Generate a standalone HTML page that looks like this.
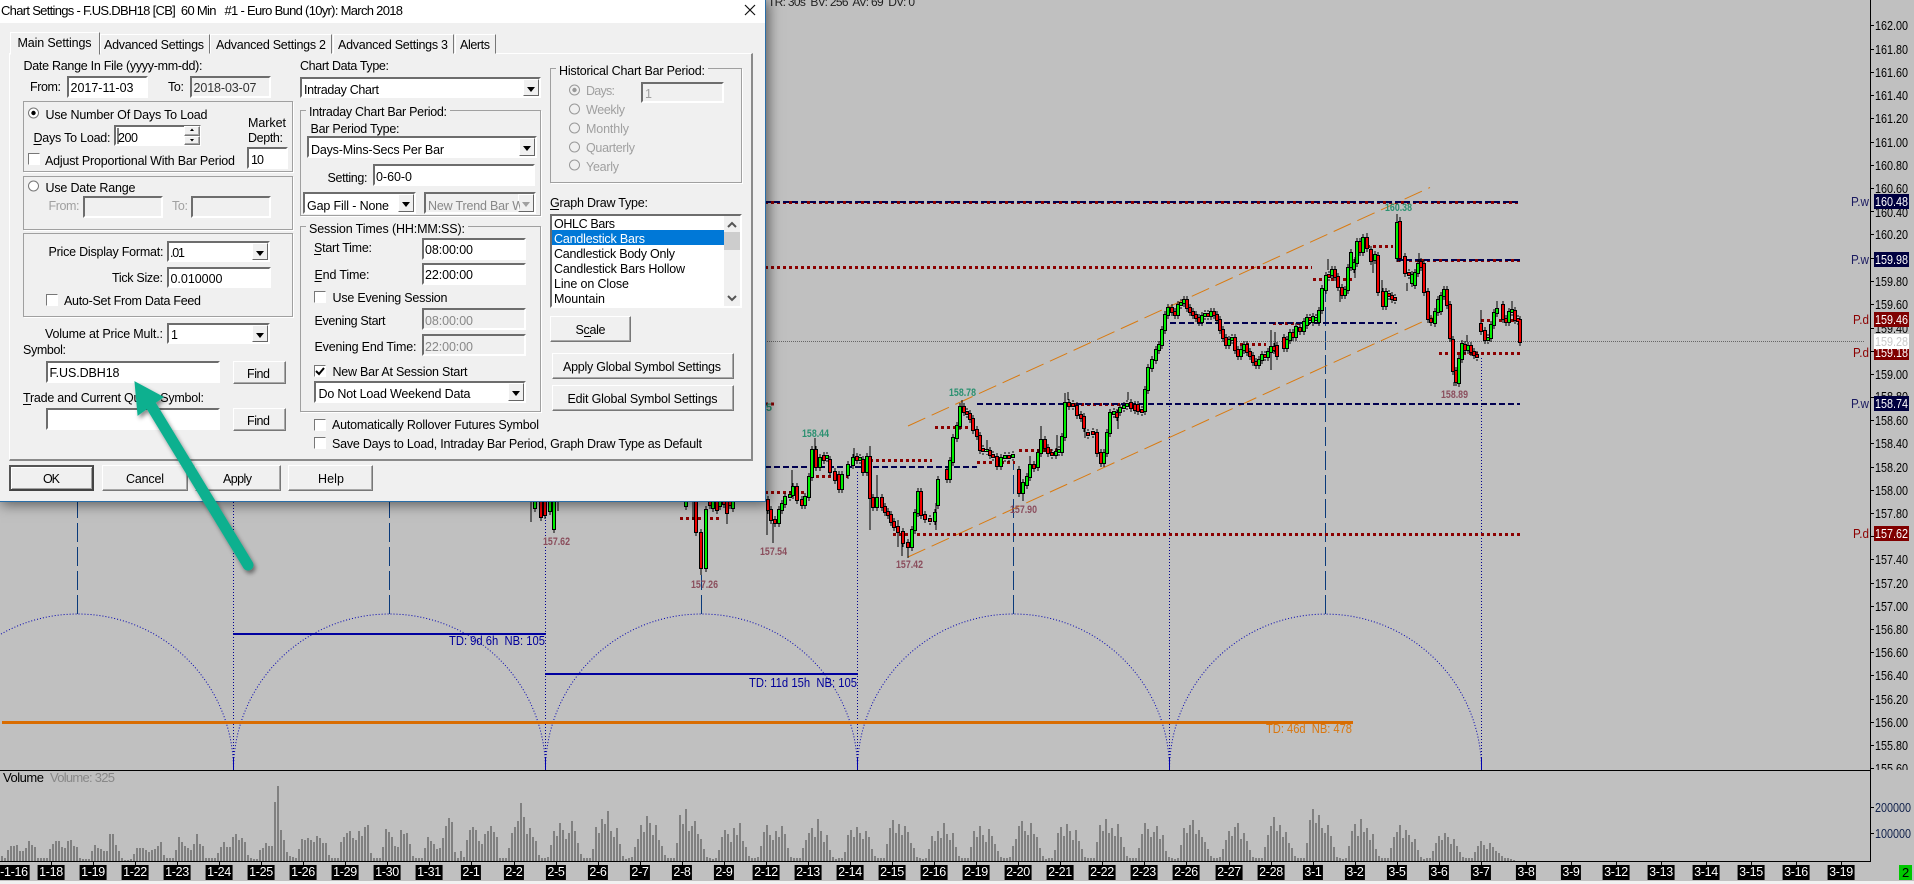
<!DOCTYPE html>
<html><head><meta charset="utf-8"><title>Chart Settings</title>
<style>
html,body{margin:0;padding:0;background:#c0c0c0}
#r{position:relative;width:1914px;height:884px;overflow:hidden;background:#c0c0c0;font-family:"Liberation Sans",sans-serif}
svg{position:absolute;left:0;top:0;overflow:hidden}
svg text{font-family:"Liberation Sans",sans-serif}
div{position:absolute;box-sizing:border-box}
i{position:absolute;top:865px;height:15px;line-height:15px;background:#000;color:#fff;font:normal 12.5px/15px "Liberation Sans",sans-serif;padding:0 1.5px;transform:translateX(-50%);letter-spacing:-.3px;white-space:nowrap}
#d{left:0;top:0;width:766px;height:502px;background:#f0f0f0;border-right:1px solid #2a6ea8;border-bottom:1px solid #2a6ea8;box-shadow:2px 2px 12px 1px rgba(0,0,0,.5)}
.ti{left:0;top:0;width:765px;height:23px;background:#fff}
.f{left:9px;top:53px;width:744px;height:408px;border:2px solid;border-color:#fff #8a8a8a #8a8a8a #fff;border-top-width:1px;border-left-width:1px}
.t{background:#f0f0f0;border:1px solid;border-color:#fff #777 #f0f0f0 #fff}
.g{border:1px solid #a0a0a0;box-shadow:1px 1px #fff}
.i,.n,.c{background:#fff;border:2px solid;border-color:#6d6d6d #fff #fff #6d6d6d}
.n{background:#f0f0f0}
.a{right:0;top:0;bottom:0;width:16px;background:#f0f0f0;border:1px solid;border-color:#fff #666 #666 #fff}
.a:after{content:"";position:absolute;left:3px;top:7px;border:4px solid transparent;border-top:5px solid #000;border-bottom:0}
.a.x:after{border-top-color:#a0a0a0}
.b{background:#f0f0f0;border:1px solid;border-color:#fff #777 #777 #fff;box-shadow:inset -1px -1px #a8a8a8}
.o{background:#f0f0f0;border:2px solid;border-color:#555 #444 #444 #555;box-shadow:inset 1px 1px #fff,inset -1px -1px #a0a0a0}
.k{width:12px;height:12px;background:#fff;border:1px solid;border-color:#777 #fff #fff #777}
</style></head><body><div id="r">

<svg width="1914" height="884" viewBox="0 0 1914 884">
<defs>
<pattern id="v" width="3" height="10" patternUnits="userSpaceOnUse"><rect x="1" width="2" height="10" fill="#808080"/></pattern>
<path id="G" fill="none" d="M779 523V510M782 510V504M785 504V497M790 497V495M793 495V487M805 505V497M809 497V477M812 477V450M820 467V458M827 458V456M842 489V475M848 475V465M853 465V458M860 460V458M867 472V457M877 507V498M912 547V530M915 530V513M918 513V492M935 521V513M938 505V480M950 479V461M953 462V438M957 438V426M960 426V407M987 451V450M1001 466V458M1005 458V456M1013 457V455M1023 493V483M1027 485V477M1030 477V465M1038 467V453M1041 453V440M1056 455V452M1059 452V450M1062 452V437M1065 437V403M1104 463V453M1107 453V433M1110 433V413M1114 414V412M1120 412V408M1124 408V406M1127 406V404M1145 411V390M1148 390V368M1152 368V360M1156 360V350M1159 350V345M1162 345V330M1165 330V315M1168 315V308M1178 315V305M1181 305V303M1184 303V300M1202 322V316M1205 316V314M1211 316V312M1229 345V340M1232 340V338M1241 356V350M1244 350V345M1259 365V360M1262 360V355M1268 357V352M1271 352V347M1287 348V340M1290 340V333M1296 337V327M1304 331V322M1307 325V318M1313 322V317M1316 320V318M1319 322V311M1322 310V289M1326 290V276M1332 275V270M1345 295V290M1348 290V268M1351 267V253M1354 269V263M1357 263V242M1363 252V238M1375 260V255M1386 306V292M1397 258V223M1412 283V275M1415 285V273M1418 273V264M1435 323V312M1438 312V300M1441 311V296M1444 296V290M1459 383V359M1462 359V344M1468 350V346M1488 340V338M1491 338V325M1494 325V313M1497 313V309M1509 322V312M1512 312V310M550 501V511M554 501V529M535 501V508M686 501V506M706 510V568M713 501V508M720 501V506M733 501V508"/>
<path id="R" fill="none" d="M768 500V510M771 510V520M775 520V523M797 487V500M802 500V505M816 450V467M824 456V460M830 460V472M835 472V480M839 475V489M857 457V460M863 460V472M870 457V498M873 498V507M882 498V507M885 507V512M888 512V515M891 515V522M894 522V527M898 527V532M903 532V543M908 543V547M921 492V515M925 515V519M930 519V521M947 470V479M964 407V412M967 412V414M970 414V419M973 419V430M977 430V436M980 436V450M983 449V451M990 451V455M993 455V457M997 457V466M1009 456V458M1019 470V493M1034 465V468M1045 440V448M1048 448V453M1052 453V455M1069 403V406M1073 404V406M1077 406V415M1081 415V418M1084 417V428M1088 433V435M1093 432V434M1097 433V453M1101 453V463M1117 413V417M1131 403V408M1135 405V410M1138 405V411M1142 410V412M1172 308V312M1175 312V315M1187 300V308M1190 308V312M1193 312V315M1196 315V318M1199 318V322M1208 314V316M1214 312V315M1217 315V320M1220 320V330M1223 330V338M1226 338V345M1235 338V350M1238 350V356M1247 345V352M1250 352V356M1253 356V362M1256 362V365M1265 355V357M1274 347V350M1277 346V356M1284 338V348M1293 333V337M1300 328V331M1310 318V320M1329 275V277M1335 270V277M1338 277V287M1342 288V295M1360 242V252M1367 238V248M1371 250V261M1378 256V292M1383 292V306M1389 294V296M1392 296V299M1395 298V300M1400 222V258M1405 257V273M1409 273V275M1421 262V267M1424 264V292M1428 292V319M1431 319V322M1447 290V305M1450 305V338M1453 340V371M1456 371V382M1465 345V350M1471 346V352M1474 352V355M1477 355V357M1481 324V331M1485 331V340M1503 305V319M1506 319V322M1515 311V320M1518 319V321M1520 320V342M541 501V517M545 501V515M696 501V532M701 533V568M727 501V513M710 501V505M717 501V510M724 501V504M730 501V505"/>
<g id="c"><use href="#G"/><use href="#R"/></g>
</defs>

<!-- volume -->
<path fill="url(#v)" transform="translate(0 861) scale(1 -1)" d="M0 0V5h3V3h3V11h3V15h3V15h3V16h3V10h3V10h3V13h3V20h3V16h3V14h3V3h3V3h3V3h3V3h3V12h3V17h3V20h3V20h3V14h3V13h3V20h3V21h3V15h3V14h3V3h3V2h3V2h3V2h3V10h3V16h3V13h3V12h3V10h3V10h3V27h3V27h3V16h3V10h3V3h3V1h3V1h3V2h3V7h3V13h3V13h3V13h3V11h3V9h3V11h3V12h3V15h3V19h3V6h3V3h3V3h3V3h3V11h3V24h3V19h3V15h3V13h3V11h3V17h3V27h3V17h3V15h3V3h3V3h3V3h3V3h3V8h3V14h3V19h3V14h3V14h3V24h3V27h3V21h3V23h3V19h3V6h3V3h3V2h3V2h3V11h3V13h3V18h3V15h3V15h3V59h3V75h3V31h3V21h3V9h3V5h3V4h3V3h3V12h3V22h3V21h3V23h3V21h3V19h3V25h3V23h3V18h3V18h3V6h3V3h3V3h3V3h3V19h3V24h3V28h3V30h3V23h3V21h3V30h3V25h3V34h3V36h3V8h3V3h3V3h3V3h3V14h3V32h3V29h3V24h3V15h3V14h3V31h3V27h3V28h3V17h3V5h3V3h3V3h3V3h3V13h3V24h3V20h3V17h3V12h3V13h3V23h3V35h3V43h3V39h3V9h3V3h3V10h3V4h3V21h3V31h3V34h3V31h3V20h3V17h3V27h3V30h3V35h3V29h3V24h3V3h3V3h3V3h3V13h3V28h3V34h3V40h3V58h3V44h3V27h3V33h3V24h3V20h3V6h3V3h3V3h3V4h3V16h3V30h3V25h3V38h3V31h3V22h3V28h3V40h3V30h3V18h3V7h3V3h3V3h3V3h3V12h3V34h3V28h3V42h3V37h3V50h3V30h3V24h3V33h3V17h3V5h3V2h3V3h3V4h3V14h3V22h3V36h3V29h3V45h3V38h3V26h3V36h3V21h3V15h3V6h3V3h3V3h3V3h3V18h3V46h3V37h3V52h3V30h3V35h3V40h3V27h3V22h3V12h3V4h3V3h3V2h3V3h3V11h3V24h3V31h3V27h3V19h3V33h3V26h3V38h3V20h3V14h3V5h3V3h3V3h3V4h3V15h3V29h3V36h3V26h3V21h3V30h3V24h3V35h3V27h3V13h3V4h3V3h3V3h3V3h3V13h3V21h3V28h3V33h3V24h3V42h3V30h3V19h3V26h3V11h3V4h3V2h3V3h3V3h3V9h3V26h3V31h3V24h3V34h3V28h3V22h3V30h3V24h3V12h3V5h3V3h3V3h3V3h3V17h3V33h3V41h3V28h3V37h3V26h3V35h3V29h3V18h3V13h3V4h3V3h3V2h3V3h3V12h3V25h3V20h3V30h3V23h3V38h3V27h3V21h3V28h3V14h3V5h3V3h3V3h3V3h3V14h3V30h3V24h3V35h3V26h3V19h3V32h3V25h3V17h3V10h3V4h3V3h3V3h3V4h3V15h3V22h3V35h3V40h3V30h3V26h3V38h3V27h3V24h3V13h3V5h3V2h3V3h3V3h3V11h3V28h3V34h3V25h3V37h3V30h3V21h3V31h3V20h3V12h3V4h3V3h3V3h3V3h3V19h3V36h3V30h3V42h3V28h3V33h3V25h3V37h3V24h3V14h3V5h3V3h3V3h3V3h3V13h3V27h3V38h3V32h3V24h3V29h3V35h3V22h3V26h3V10h3V4h3V3h3V2h3V3h3V16h3V33h3V28h3V36h3V41h3V27h3V31h3V24h3V19h3V12h3V5h3V3h3V3h3V4h3V12h3V21h3V30h3V25h3V34h3V38h3V22h3V28h3V20h3V11h3V4h3V3h3V3h3V3h3V14h3V26h3V35h3V44h3V30h3V36h3V24h3V29h3V18h3V13h3V5h3V3h3V3h3V3h3V18h3V41h3V52h3V38h3V46h3V33h3V28h3V36h3V25h3V14h3V4h3V3h3V2h3V3h3V15h3V30h3V37h3V25h3V42h3V29h3V33h3V21h3V27h3V12h3V5h3V3h3V3h3V3h3V13h3V24h3V29h3V36h3V23h3V31h3V26h3V19h3V22h3V11h3V4h3V2h3V3h3V3h3V10h3V18h3V25h3V21h3V28h3V24h3V17h3V22h3V15h3V9h3V4h3V3h3V3h3V3h3V9h3V15h3V20h3V16h3V12h3V18h3V14h3V10h3V8h3V5h3V3h3V3h3V2h3V1h3V0Z"/>

<!-- arches -->
<g fill="none" stroke="#0000b0" stroke-width="1" stroke-dasharray="1 2">
<path d="M-78.5 770A156 156 0 0 1 233.5 770M233.5 770A156 156 0 0 1 545.5 770M545.5 770A156 156 0 0 1 857.5 770M857.5 770A156 156 0 0 1 1169.5 770M1169.5 770A156 156 0 0 1 1481.5 770"/>
<path stroke="#000090" d="M233.5 770V501M545.5 770V501M857.5 770V472M1169.5 770V340M1481.5 770V357"/>
</g>
<path stroke="#0000b0" stroke-width="1" fill="none" d="M233.5 770V758M545.5 770V758M857.5 770V758M1169.5 770V758M1481.5 770V758"/>
<path stroke="#0a3a7a" stroke-width="1" fill="none" stroke-dasharray="19 5" d="M77.5 614V501M389.5 614V501M701.5 614V575M1013.5 614V462M1325.5 614V287"/>

<!-- blue/orange spans -->
<path stroke="#0000a0" stroke-width="2" fill="none" d="M233 634H546M545 674H858"/>
<path stroke="#d96c00" stroke-width="3" fill="none" d="M2 722.5H1353"/>
<text x="449" y="645" font-size="12.5" fill="#00009a" textLength="96" lengthAdjust="spacingAndGlyphs" xml:space="preserve">TD: 9d 6h  NB: 105</text>
<text x="749" y="687" font-size="12.5" fill="#00009a" textLength="108" lengthAdjust="spacingAndGlyphs" xml:space="preserve">TD: 11d 15h  NB: 105</text>
<text x="1266" y="733" font-size="12.5" fill="#d9770f" textLength="86" lengthAdjust="spacingAndGlyphs" xml:space="preserve">TD: 46d  NB: 478</text>

<!-- channel -->
<path stroke="#d97a10" stroke-width="1" fill="none" stroke-dasharray="19 7" d="M908 557L1433 317M908 426L1430 187.5"/>

<!-- levels -->
<path stroke="#8b0000" stroke-width="3" fill="none" stroke-dasharray="3 3" d="M893 534.5H1520M935 427.5H973M870 460.5H932M765 492.5H806M810 476.5H848M977 462.5H1015M1019 450.5H1057M1063 404.5H1120M1273 323.5H1310M1240 344.5H1266M1313 279.5H1352M1355 246.5H1393M765 267.5H1312M1397 260.5H1520M1439 353.5H1520M1481 320.5H1520M765 202.5H1520M680 518.5H719M765 404H775"/>
<path stroke="#000050" stroke-width="2" fill="none" stroke-dasharray="6 3" d="M765 467H977M977 404H1520M1170 323H1397M1397 260H1520M765 202H1520"/>

<!-- current price line -->
<path stroke="#666" stroke-width="1" fill="none" stroke-dasharray="1 1" d="M765 341.5H1865"/>

<!-- candles -->
<g fill="none" stroke="#000">
<use href="#c" stroke-width="1" transform="translate(0 -4)"/>
<use href="#c" stroke-width="1" transform="translate(0 4)"/>
<path stroke-width="1" d="M767 500V535M773 523V543M792 470V497M815 438V450M854 448V458M870 446V530M877 475V507M898 520V547M902 535V556M908 547V558M936 503V530M962 400V407M987 440V450M1023 493V501M1030 456V475M1041 426V440M1057 435V450M1065 393V403M1068 392V400M1085 420V438M1118 410V429M1128 392V400M1271 330V370M1275 332V352M1328 259V270M1340 290V302M1355 257V278M1367 233V238M1373 257V273M1382 280V292M1397 214V223M1400 217V222M1407 283V291M1419 253V262M1454 382V386M1467 335V342M1481 310V324M1497 301V307M1512 301V312M531 501V522M558 501V511M554 529V533M701 568V575M727 513V524M693 501V520"/>
<use href="#c" stroke-width="4" transform="translate(0 -1)"/>
<use href="#c" stroke-width="4" transform="translate(0 1)"/>
</g>
<use href="#G" stroke="#00f000" stroke-width="2"/>
<use href="#R" stroke="#f00000" stroke-width="2"/>

<!-- chart value labels -->
<g font-size="11" fill="#8a4d5c" font-weight="bold">
<text x="543" y="545" textLength="27" lengthAdjust="spacingAndGlyphs">157.62</text>
<text x="691" y="588" textLength="27" lengthAdjust="spacingAndGlyphs">157.26</text>
<text x="760" y="555" textLength="27" lengthAdjust="spacingAndGlyphs">157.54</text>
<text x="896" y="568" textLength="27" lengthAdjust="spacingAndGlyphs">157.42</text>
<text x="1010" y="513" textLength="27" lengthAdjust="spacingAndGlyphs">157.90</text>
<text x="1441" y="398" textLength="27" lengthAdjust="spacingAndGlyphs">158.89</text>
</g>
<g font-size="11" fill="#2a9070" font-weight="bold">
<text x="802" y="437" textLength="27" lengthAdjust="spacingAndGlyphs">158.44</text>
<text x="949" y="396" textLength="27" lengthAdjust="spacingAndGlyphs">158.78</text>
<text x="1385" y="211" textLength="27" lengthAdjust="spacingAndGlyphs">160.38</text>
<text x="766" y="411" textLength="6" lengthAdjust="spacingAndGlyphs">5</text>
</g>
<text x="768" y="6" font-size="12" fill="#222" textLength="147" xml:space="preserve">TR: 30s  BV: 256  AV: 69  DV: 0</text>

<!-- frame lines -->
<path stroke="#000" stroke-width="1" fill="none" d="M0 770.5H1870M0 861.5H1870M1870.5 0V862"/>
<path stroke="#000" stroke-width="1" fill="none" d="M1871 25.5h3M1871 49.5h3M1871 72.5h3M1871 95.5h3M1871 118.5h3M1871 142.5h3M1871 165.5h3M1871 188.5h3M1871 211.5h3M1871 234.5h3M1871 258.5h3M1871 281.5h3M1871 304.5h3M1871 328.5h3M1871 351.5h3M1871 374.5h3M1871 397.5h3M1871 420.5h3M1871 443.5h3M1871 467.5h3M1871 490.5h3M1871 513.5h3M1871 536.5h3M1871 559.5h3M1871 583.5h3M1871 606.5h3M1871 629.5h3M1871 652.5h3M1871 675.5h3M1871 699.5h3M1871 722.5h3M1871 745.5h3M1871 768.5h3M1871 807.5h3M1871 833.5h3M51.5 862v3M93.5 862v3M135.5 862v3M177.5 862v3M219.5 862v3M261.5 862v3M303.5 862v3M345.5 862v3M387.5 862v3M429.5 862v3M471.5 862v3M514.5 862v3M556.5 862v3M598.5 862v3M640.5 862v3M682.5 862v3M724.5 862v3M766.5 862v3M808.5 862v3M850.5 862v3M892.5 862v3M934.5 862v3M976.5 862v3M1018.5 862v3M1060.5 862v3M1102.5 862v3M1144.5 862v3M1186.5 862v3M1229.5 862v3M1271.5 862v3M1313.5 862v3M1355.5 862v3M1397.5 862v3M1439.5 862v3M1481.5 862v3M1526.5 862v3M1571.5 862v3M1616.5 862v3M1661.5 862v3M1706.5 862v3M1751.5 862v3M1796.5 862v3M1841.5 862v3"/>

<text x="3" y="782" font-size="13" fill="#000" textLength="41">Volume</text>
<text x="50" y="782" font-size="13" fill="#888" textLength="65">Volume: 325</text>

<!-- price axis -->
<g transform="translate(1875 0) scale(.83 1)" font-size="13" fill="#000">
<text y="30">162.00</text><text y="54">161.80</text><text y="77">161.60</text><text y="100">161.40</text><text y="123">161.20</text><text y="147">161.00</text><text y="170">160.80</text><text y="193">160.60</text><text y="217">160.40</text><text y="239">160.20</text><text y="286">159.80</text><text y="309">159.60</text><text y="333">159.40</text><text y="379">159.00</text><text y="401">158.80</text><text y="425">158.60</text><text y="448">158.40</text><text y="472">158.20</text><text y="495">158.00</text><text y="518">157.80</text><text y="564">157.40</text><text y="588">157.20</text><text y="611">157.00</text><text y="634">156.80</text><text y="657">156.60</text><text y="680">156.40</text><text y="704">156.20</text><text y="727">156.00</text><text y="750">155.80</text><text y="773">155.60</text>
</g>
<rect x="1870" y="767" width="44" height="33" fill="#c0c0c0" style="display:none"/>
<rect x="1870" y="770" width="44" height="30" fill="#c0c0c0"/>
<path stroke="#000" stroke-width="1" fill="none" d="M1870.5 770V862M1871 807.5h3M1871 833.5h3"/>
<path d="M1874 194h35v15h-35zM1874 252h35v15h-35zM1874 396h35v15h-35z" fill="#000040"/>
<path d="M1874 312h35v15h-35zM1874 345h35v15h-35zM1874 526h35v15h-35z" fill="#800000"/>
<rect x="1874" y="334" width="35" height="15" fill="#fff"/>
<g transform="translate(1875 0) scale(.83 1)" font-size="13" fill="#fff">
<text y="206">160.48</text><text y="264">159.98</text><text y="324">159.46</text><text y="357">159.18</text><text y="408">158.74</text><text y="538">157.62</text>
</g>
<rect x="1874" y="334" width="35" height="15" fill="#fff"/>
<g transform="translate(1875 0) scale(.83 1)" font-size="13"><text y="346" fill="#c8c8c8">159.28</text></g>
<g font-size="13" fill="#1a1a60"><text x="1851" y="206" textLength="18" lengthAdjust="spacingAndGlyphs">P.w</text><text x="1851" y="264" textLength="18" lengthAdjust="spacingAndGlyphs">P.w</text><text x="1851" y="408" textLength="18" lengthAdjust="spacingAndGlyphs">P.w</text></g>
<g font-size="13" fill="#8b0000"><text x="1853" y="324" textLength="16" lengthAdjust="spacingAndGlyphs">P.d</text><text x="1853" y="357" textLength="16" lengthAdjust="spacingAndGlyphs">P.d</text><text x="1853" y="538" textLength="16" lengthAdjust="spacingAndGlyphs">P.d</text></g>
<g transform="translate(1875 0) scale(.83 1)" font-size="13" fill="#10204a"><text y="812">200000</text><text y="838">100000</text></g>
<rect x="1899" y="865" width="13" height="15" fill="#00c800"/>
<text x="1902" y="877" font-size="13" fill="#000">2</text>
<rect x="0" y="881" width="1914" height="3" fill="#f0f0f0"/>
</svg>

<i style="left:14px">-1-16</i><i style="left:51px">1-18</i><i style="left:93px">1-19</i><i style="left:135px">1-22</i><i style="left:177px">1-23</i><i style="left:219px">1-24</i><i style="left:261px">1-25</i><i style="left:303px">1-26</i><i style="left:345px">1-29</i><i style="left:387px">1-30</i><i style="left:429px">1-31</i><i style="left:471px">2-1</i><i style="left:514px">2-2</i><i style="left:556px">2-5</i><i style="left:598px">2-6</i><i style="left:640px">2-7</i><i style="left:682px">2-8</i><i style="left:724px">2-9</i><i style="left:766px">2-12</i><i style="left:808px">2-13</i><i style="left:850px">2-14</i><i style="left:892px">2-15</i><i style="left:934px">2-16</i><i style="left:976px">2-19</i><i style="left:1018px">2-20</i><i style="left:1060px">2-21</i><i style="left:1102px">2-22</i><i style="left:1144px">2-23</i><i style="left:1186px">2-26</i><i style="left:1229px">2-27</i><i style="left:1271px">2-28</i><i style="left:1313px">3-1</i><i style="left:1355px">3-2</i><i style="left:1397px">3-5</i><i style="left:1439px">3-6</i><i style="left:1481px">3-7</i><i style="left:1526px">3-8</i><i style="left:1571px">3-9</i><i style="left:1616px">3-12</i><i style="left:1661px">3-13</i><i style="left:1706px">3-14</i><i style="left:1751px">3-15</i><i style="left:1796px">3-16</i><i style="left:1841px">3-19</i>

<!-- dialog -->
<div id="d">
<div class="ti"></div>
<div class="f"></div>
<div class="t" style="left:100px;top:34px;width:110px;height:20px"></div>
<div class="t" style="left:210px;top:34px;width:122px;height:20px"></div>
<div class="t" style="left:333px;top:34px;width:121px;height:20px"></div>
<div class="t" style="left:455px;top:34px;width:41px;height:20px"></div>
<div class="t" style="left:10px;top:32px;width:90px;height:23px;z-index:1"></div>

<div class="g" style="left:23px;top:101px;width:270px;height:71px"></div>
<div class="g" style="left:23px;top:176px;width:270px;height:54px"></div>
<div class="g" style="left:23px;top:233px;width:270px;height:84px"></div>
<div class="g" style="left:300px;top:110px;width:241px;height:106px"></div>
<div class="g" style="left:300px;top:226px;width:241px;height:186px"></div>
<div class="g" style="left:550px;top:68px;width:192px;height:115px"></div>

<div class="i" style="left:67px;top:76px;width:81px;height:22px"></div>
<div class="n" style="left:190px;top:76px;width:81px;height:22px"></div>
<div class="i" style="left:114px;top:125px;width:87px;height:21px"></div>
<div class="b" style="left:184px;top:126px;width:16px;height:10px"></div>
<div class="b" style="left:184px;top:136px;width:16px;height:9px"></div>
<div class="i" style="left:247px;top:147px;width:41px;height:22px"></div>
<div class="n" style="left:83px;top:196px;width:80px;height:22px"></div>
<div class="n" style="left:191px;top:196px;width:80px;height:22px"></div>
<div class="c" style="left:167px;top:241px;width:103px;height:21px"><div class="a"></div></div>
<div class="i" style="left:167px;top:267px;width:104px;height:21px"></div>
<div class="c" style="left:167px;top:323px;width:103px;height:21px"><div class="a"></div></div>
<div class="i" style="left:46px;top:361px;width:174px;height:22px"></div>
<div class="b" style="left:233px;top:361px;width:53px;height:23px"></div>
<div class="i" style="left:46px;top:408px;width:174px;height:22px"></div>
<div class="b" style="left:233px;top:408px;width:53px;height:23px"></div>

<div class="c" style="left:300px;top:77px;width:241px;height:21px"><div class="a"></div></div>
<div class="c" style="left:307px;top:136px;width:230px;height:22px"><div class="a"></div></div>
<div class="i" style="left:373px;top:164px;width:162px;height:22px"></div>
<div class="c" style="left:303px;top:192px;width:113px;height:22px"><div class="a"></div></div>
<div class="n" style="left:424px;top:192px;width:112px;height:22px"><div class="a x"></div></div>
<div class="i" style="left:422px;top:238px;width:104px;height:22px"></div>
<div class="i" style="left:422px;top:263px;width:104px;height:22px"></div>
<div class="n" style="left:422px;top:308px;width:104px;height:22px"></div>
<div class="n" style="left:422px;top:334px;width:104px;height:22px"></div>
<div class="c" style="left:314px;top:381px;width:212px;height:22px"><div class="a"></div></div>

<div class="n" style="left:641px;top:82px;width:83px;height:21px"></div>
<div class="i" style="left:550px;top:214px;width:192px;height:94px"></div>
<div style="left:552px;top:230px;width:172px;height:15px;background:#0078d7"></div>
<div style="left:724px;top:216px;width:16px;height:90px;background:#f0f0f0"></div>
<div style="left:724px;top:232px;width:16px;height:18px;background:#cdcdcd"></div>
<div class="b" style="left:550px;top:316px;width:81px;height:26px"></div>
<div class="b" style="left:552px;top:353px;width:182px;height:26px"></div>
<div class="b" style="left:552px;top:385px;width:182px;height:26px"></div>

<div class="k" style="left:28px;top:153px"></div>
<div class="k" style="left:46px;top:294px"></div>
<div class="k" style="left:314px;top:291px"></div>
<div class="k" style="left:314px;top:365px"></div>
<div class="k" style="left:314px;top:419px"></div>
<div class="k" style="left:314px;top:437px"></div>

<div class="o" style="left:9px;top:465px;width:85px;height:26px"></div>
<div class="b" style="left:102px;top:465px;width:86px;height:26px"></div>
<div class="b" style="left:195px;top:465px;width:86px;height:26px"></div>
<div class="b" style="left:288px;top:465px;width:85px;height:26px"></div>

<svg width="765" height="501" viewBox="0 0 765 501" style="z-index:2">
<rect x="306" y="105" width="144" height="10" fill="#f0f0f0"/>
<rect x="306" y="221" width="162" height="10" fill="#f0f0f0"/>
<rect x="556" y="63" width="152" height="10" fill="#f0f0f0"/>
<path stroke="#111" stroke-width="1.2" fill="none" d="M745 5L755 15M755 5L745 15"/>
<g font-size="12.5" fill="#000" xml:space="preserve">
<text x="1" y="15" font-size="13" textLength="402" xml:space="preserve">Chart Settings - F.US.DBH18 [CB]  60 Min   #1 - Euro Bund (10yr): March 2018</text>
<text x="17.5" y="47" textLength="74">Main Settings</text>
<text x="104" y="49" textLength="100">Advanced Settings</text>
<text x="216" y="49" textLength="110">Advanced Settings 2</text>
<text x="338" y="49" textLength="110">Advanced Settings 3</text>
<text x="460" y="49" textLength="30">Alerts</text>
<text x="23.5" y="70" textLength="179">Date Range In File (yyyy-mm-dd):</text>
<text x="30" y="91" textLength="31">From:</text>
<text x="70.5" y="92" textLength="63">2017-11-03</text>
<text x="168" y="91" textLength="16">To:</text>
<text x="193.5" y="92" textLength="63" fill="#333">2018-03-07</text>
<text x="45.5" y="119" textLength="162">Use Number Of Days To Load</text>
<text x="33.5" y="142" textLength="77">Days To Load:</text>
<text x="118" y="142" textLength="20">200</text>
<text x="248" y="127" textLength="38">Market</text>
<text x="248" y="142" textLength="35">Depth:</text>
<text x="45" y="165" textLength="190">Adjust Proportional With Bar Period</text>
<text x="251" y="164" textLength="13">10</text>
<text x="45.5" y="192" textLength="90">Use Date Range</text>
<text x="48.5" y="210" textLength="31" fill="#a0a0a0">From:</text>
<text x="172" y="210" textLength="16" fill="#a0a0a0">To:</text>
<text x="48.5" y="256" textLength="115">Price Display Format:</text>
<text x="170" y="257" textLength="15">.01</text>
<text x="112" y="282" textLength="51">Tick Size:</text>
<text x="170.5" y="283" textLength="52">0.010000</text>
<text x="64" y="305" textLength="137">Auto-Set From Data Feed</text>
<text x="45" y="338" textLength="118">Volume at Price Mult.:</text>
<text x="171" y="339">1</text>
<text x="23" y="354" textLength="43">Symbol:</text>
<text x="49.5" y="377" textLength="70">F.US.DBH18</text>
<text x="247" y="378" textLength="23">Find</text>
<text x="23" y="402" textLength="181">Trade and Current Quote Symbol:</text>
<text x="247" y="425" textLength="23">Find</text>
<text x="43" y="483" textLength="17">OK</text>
<text x="126" y="483" textLength="38">Cancel</text>
<text x="223" y="483" textLength="29">Apply</text>
<text x="318" y="483" textLength="26">Help</text>
<text x="300" y="70" textLength="89">Chart Data Type:</text>
<text x="304" y="94" textLength="75">Intraday Chart</text>
<text x="309" y="116" textLength="138">Intraday Chart Bar Period:</text>
<text x="310.5" y="133" textLength="89">Bar Period Type:</text>
<text x="311" y="154" textLength="133">Days-Mins-Secs Per Bar</text>
<text x="327.5" y="182" textLength="40">Setting:</text>
<text x="376" y="181" textLength="36">0-60-0</text>
<text x="307" y="210" textLength="82">Gap Fill - None</text>
<svg x="428" y="195" width="92" height="20"><text x="0" y="15" textLength="96" fill="#888">New Trend Bar W</text></svg>
<text x="309" y="233" textLength="156">Session Times (HH:MM:SS):</text>
<text x="314" y="252" textLength="58">Start Time:</text>
<text x="425" y="254" textLength="48">08:00:00</text>
<text x="314.5" y="279" textLength="55">End Time:</text>
<text x="425" y="279" textLength="48">22:00:00</text>
<text x="332.5" y="302" textLength="115">Use Evening Session</text>
<text x="314.5" y="325" textLength="71">Evening Start</text>
<text x="425" y="325" textLength="48" fill="#888">08:00:00</text>
<text x="314.5" y="351" textLength="102">Evening End Time:</text>
<text x="425" y="351" textLength="48" fill="#888">22:00:00</text>
<text x="332.5" y="376" textLength="135">New Bar At Session Start</text>
<text x="318.5" y="398" textLength="152">Do Not Load Weekend Data</text>
<text x="332" y="429" textLength="207">Automatically Rollover Futures Symbol</text>
<text x="332" y="448" textLength="370">Save Days to Load, Intraday Bar Period, Graph Draw Type as Default</text>
<text x="559" y="75" textLength="146">Historical Chart Bar Period:</text>
<g fill="#a0a0a0">
<text x="586" y="95" textLength="29">Days:</text>
<text x="586" y="114" textLength="39">Weekly</text>
<text x="586" y="133" textLength="43">Monthly</text>
<text x="586" y="152" textLength="49">Quarterly</text>
<text x="586" y="171" textLength="33">Yearly</text>
<text x="645" y="98">1</text>
</g>
<text x="550" y="207" textLength="98">Graph Draw Type:</text>
<text x="554" y="228" textLength="61">OHLC Bars</text>
<text x="554" y="243" textLength="91" fill="#fff">Candlestick Bars</text>
<text x="554" y="258" textLength="121">Candlestick Body Only</text>
<text x="554" y="273" textLength="131">Candlestick Bars Hollow</text>
<text x="554" y="288" textLength="75">Line on Close</text>
<text x="554" y="303" textLength="51">Mountain</text>
<text x="575.5" y="334" textLength="30">Scale</text>
<text x="563" y="371" textLength="158">Apply Global Symbol Settings</text>
<text x="567.5" y="403" textLength="150">Edit Global Symbol Settings</text>
</g>
<path stroke="#000" stroke-width="1" fill="none" d="M33.5 144.5h8M23 404.5h8M314 254.5h7M314.5 281.5h7M550 209.5h9M584 336.5h7M118 128v16"/>
<g stroke="#777" stroke-width="1">
<circle cx="33.5" cy="113" r="5" fill="#fff"/><circle cx="33.5" cy="186" r="5" fill="#fff"/>
<g fill="#f0f0f0" stroke="#999"><circle cx="574.5" cy="90" r="5"/><circle cx="574.5" cy="109" r="5"/><circle cx="574.5" cy="128" r="5"/><circle cx="574.5" cy="147" r="5"/><circle cx="574.5" cy="165" r="5"/></g>
</g>
<circle cx="33.5" cy="113" r="2.2" fill="#000"/><circle cx="574.5" cy="90" r="2.2" fill="#999"/>
<path d="M190 131h4l-2-2.5zM190 139h4l-2 2.5z" fill="#000"/>
<path d="M316 371l3 3 5-6" fill="none" stroke="#000" stroke-width="2"/>
<path d="M728 227l4-4 4 4M728 296l4 4 4-4" fill="none" stroke="#555" stroke-width="2"/>
</svg>
</div>

<!-- arrow -->
<svg width="1914" height="884" viewBox="0 0 1914 884" style="z-index:3">
<defs><filter id="s" x="-30%" y="-30%" width="160%" height="160%"><feDropShadow dx="2" dy="3" stdDeviation="2" flood-color="#000" flood-opacity=".45"/></filter></defs>
<g filter="url(#s)" fill="#0bb08f" stroke="#0bb08f">
<path d="M152 407L248 565" stroke-width="11" stroke-linecap="round" fill="none"/>
<path d="M135 382L138 415L163 397Z" stroke-width="1"/>
</g>
</svg>
</div></body></html>
